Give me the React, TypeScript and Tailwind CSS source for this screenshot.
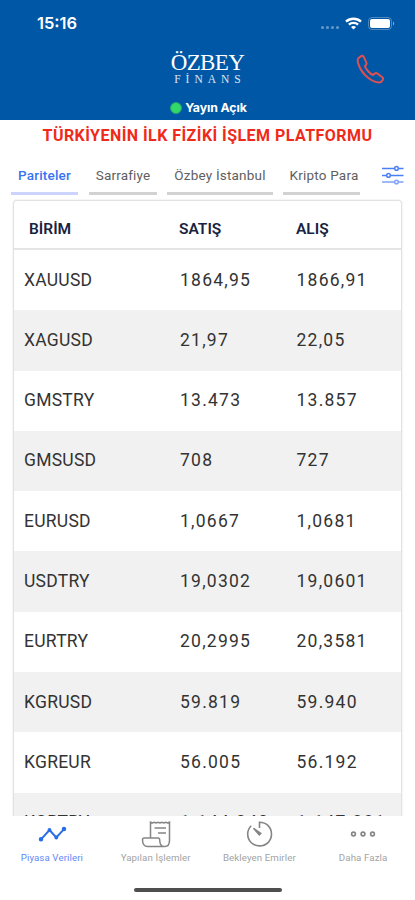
import React from "react";

const rows = [
  ["XAUUSD", "1864,95", "1866,91"],
  ["XAGUSD", "21,97", "22,05"],
  ["GMSTRY", "13.473", "13.857"],
  ["GMSUSD", "708", "727"],
  ["EURUSD", "1,0667", "1,0681"],
  ["USDTRY", "19,0302", "19,0601"],
  ["EURTRY", "20,2995", "20,3581"],
  ["KGRUSD", "59.819", "59.940"],
  ["KGREUR", "56.005", "56.192"],
  ["KGRTRY", "1.144.240", "1.147.231"],
];

function StatusBar() {
  return (
    <div className="flex h-[46px] items-center pl-[37px] pr-[20px] text-white">
      <span className="font-[Inter,sans-serif] text-[16.5px] leading-none font-semibold">15:16</span>
      <div className="ml-auto flex items-center">
        <div className="mt-2 flex gap-[2px] opacity-40">
          {[0, 1, 2, 3].map((i) => (
            <span key={i} className="size-[3px] rounded-full bg-white" />
          ))}
        </div>
        <svg className="ml-[6px]" width="17" height="13" viewBox="0 0 17 13" fill="none" stroke="#fff" strokeWidth="2.4">
          <path d="M1 4.7C5.2.7 11.8.7 16 4.7" />
          <path d="M3.9 7.7c2.6-2.4 6.6-2.4 9.2 0" />
          <path d="M8.5 12.6 6 9.9c1.4-1.3 3.6-1.3 5 0z" fill="#fff" stroke="none" />
        </svg>
        <svg className="ml-[6px]" width="27" height="13" viewBox="0 0 27 13">
          <rect x=".5" y=".5" width="23" height="12" rx="3.5" fill="none" stroke="#fff" strokeOpacity=".3" />
          <rect x="2" y="2" width="20" height="9" rx="2" fill="#fff" />
          <path d="M25 4.5c1.6.7 1.6 3.3 0 4z" fill="#fff" fillOpacity=".5" />
        </svg>
      </div>
    </div>
  );
}

function Header() {
  return (
    <header className="h-[120px] shrink-0 bg-[#0057a5] text-white">
      <StatusBar />
      <div className="grid h-[74px] grid-cols-[1fr_90px_1fr]">
        <div />
        <div className="flex flex-col items-center whitespace-nowrap">
          <div className="mt-[5px] font-['Liberation_Serif',serif] text-[23px] leading-[23px] tracking-[-0.6px]">ÖZBEY</div>
          <div className="pl-[5px] font-['Liberation_Serif',serif] text-[11.5px] leading-[11px] tracking-[5px] text-white/85">FİNANS</div>
          <div className="mt-[15px] flex items-center gap-[3px] pl-[2px]">
            <span className="size-[12px] rounded-full border border-[#249f72] bg-[#32d968]" />
            <span className="font-[Inter,sans-serif] text-[12.3px] leading-[15px] font-bold tracking-[-0.1px]">Yayın Açık</span>
          </div>
        </div>
        <div className="flex justify-end pt-[8px] pr-[30px]">
          <svg width="29" height="30" viewBox="0 0 29 30" fill="none" stroke="#df5050" strokeWidth="2" strokeLinejoin="round">
            <path d="M5.2 2.2 2.7 3.8C1.5 4.8 1.5 7 2.2 9.4c1.6 5.3 5.3 10.6 9.6 14.2 3.3 2.8 7.6 4.9 11.2 4.9 1.6 0 2.8-.8 3.6-2.3.7-1.2.8-2.2-.3-3L21.4 19.5c-1-.7-2-.6-2.9.2l-1.5 1.3c-1.6-.6-3.2-1.9-4.6-3.5-1.7-1.8-2.9-3.6-3.5-5.2l1.1-1.3c.7-.9.7-1.8.2-2.8L7.9 3.1c-.6-1.200-1.600-1.600-2.700-.9Z" />
          </svg>
        </div>
      </div>
    </header>
  );
}

function Tabs() {
  return (
    <div className="flex h-[50px] shrink-0 pt-[14px] pl-[11px] text-[13.5px] leading-[20px] whitespace-nowrap text-[#606060]">
      <div className="flex h-[30px] w-[67px] justify-center border-b-[3px] border-[#ccd3fc] font-medium tracking-[0.2px] text-[#3873f3]">Pariteler</div>
      <div className="ml-[11px] flex h-[30px] w-[68px] justify-center border-b-[3px] border-[#d2d2d2] tracking-[0.15px]">Sarrafiye</div>
      <div className="ml-[10px] flex h-[30px] w-[106px] justify-center border-b-[3px] border-[#d2d2d2] tracking-[0.2px]">Özbey İstanbul</div>
      <div className="ml-[10px] flex h-[30px] w-[77px] justify-center border-b-[3px] border-[#d2d2d2] pl-[5px] tracking-[0.2px]">Kripto Para</div>
      <svg className="ml-[22px]" width="22" height="20" viewBox="0 0 22 20" fill="none" stroke="#4a80f4" strokeWidth="1.5">
        <path d="M0 3.4h12M17 3.4h4.5M0 10.4h4M9 10.4h12.5" />
        <circle cx="14.5" cy="3.4" r="1.8" />
        <circle cx="6.5" cy="10.4" r="1.8" />
        <g stroke="#7fa3f8">
          <path d="M0 17h12M17 17h4.5" />
          <circle cx="14.5" cy="17" r="1.8" />
        </g>
      </svg>
    </div>
  );
}

function RateTable() {
  return (
    <div className="mx-[13px] mt-[-1px] h-[616px] w-[389px] shrink-0 overflow-hidden rounded-t border-x border-t border-[#e2e2e2] shadow-[0_0_2px_#ddd]">
      <div className="grid h-[49px] grid-cols-[150px_117px_1fr] items-center border-b-2 border-[#e4e4e4] pt-[10px] pl-[15px] text-[15.5px] font-semibold text-[#17233f]">
        <span>BİRİM</span>
        <span>SATIŞ</span>
        <span>ALIŞ</span>
      </div>
      {rows.map(([name, sell, buy]) => (
        <div key={name} className="grid h-[60.3px] grid-cols-[156px_116.5px_1fr] items-center pb-[1px] pl-[10px] text-[17.5px] text-[#333] odd:bg-[#f1f1f1] even:bg-white last:pb-[2px]">
          <span className="tracking-[0.25px]">{name}</span>
          <span className="tracking-[1.25px]">{sell}</span>
          <span className="tracking-[1.25px]">{buy}</span>
        </div>
      ))}
    </div>
  );
}

function BottomNav() {
  return (
    <nav className="h-[84px] shrink-0 bg-white text-[#a3a3a3]">
      <div className="grid h-[50px] grid-cols-4 text-[9.7px] leading-[12px] tracking-[0.1px]">
        <div className="flex flex-col items-center text-[#6389f7]">
          <svg className="mt-[5px] mb-[2px]" width="30" height="29" viewBox="0 0 30 29" fill="#286ee8" stroke="#286ee8" strokeWidth="1.9">
            <path d="m4 18.3 8.5-9.3 6.8 7.5 7.7-8.3" fill="none" />
            <circle cx="4" cy="18.3" r="1.3" />
            <circle cx="12.5" cy="9" r="1" />
            <circle cx="19.3" cy="16.5" r="1" />
            <circle cx="27" cy="8" r="1.3" />
          </svg>
          Piyasa Verileri
        </div>
        <div className="flex flex-col items-center">
          <svg className="mt-[3px] mb-[4px]" width="30" height="29" viewBox="0 0 30 29" fill="none" stroke="#858585" strokeWidth="1.5">
            <path d="M9.500 19V3.200l1.900.8 1.900-.8 1.900.8 1.900-.8 1.900.8 1.900-.8 1.900.8 1.900-.8 1.900.8 1.900-.8V21.500c0 4-1.800 6-4.800 6H6.500c-3 0-4.900-2.700-5-6.500 0-1.300.5-2 1.800-2H17c1.200 0 1.700.7 1.700 2 .1 3.700 1.600 6.500 4.300 6.500M13.500 9H25M17 14h8" />
          </svg>
          Yapılan İşlemler
        </div>
        <div className="flex flex-col items-center">
          <svg className="mt-[3px] mb-[4px]" width="28" height="29" viewBox="0 0 28 29" fill="none" stroke="#858585" strokeWidth="1.6">
            <path d="M14.500 9V3.200C21.500 3.200 26.500 8.200 26.500 15.100S21.300 26.900 14.500 26.900 2.700 21.800 2.700 15.100c0-3.400 1.200-6 3.500-8.300" />
            <path d="m8.500 9.300 7.200 5.100-1.400 1.500z" fill="#858585" />
          </svg>
          Bekleyen Emirler
        </div>
        <div className="flex flex-col items-center">
          <svg className="mt-[3px] mb-[4px]" width="28" height="29" viewBox="0 0 28 29" fill="none" stroke="#858585" strokeWidth="1.6">
            <circle cx="4.5" cy="15" r="1.9" />
            <circle cx="14" cy="15" r="1.9" />
            <circle cx="23.5" cy="15" r="1.9" />
          </svg>
          Daha Fazla
        </div>
      </div>
      <div className="mt-[22px] ml-[134px] h-1 w-[148px] rounded-full bg-[#4e4e4e]" />
    </nav>
  );
}

export default function App() {
  return (
    <div className="flex h-[900px] w-[415px] flex-col overflow-hidden bg-white font-[Roboto,sans-serif]">
      <Header />
      <div className="flex h-[31px] shrink-0 items-center justify-center pt-px text-[16px] font-bold tracking-[0.45px] whitespace-nowrap text-[#f02a1a]">TÜRKİYENİN İLK FİZİKİ İŞLEM PLATFORMU</div>
      <Tabs />
      <RateTable />
      <BottomNav />
    </div>
  );
}
